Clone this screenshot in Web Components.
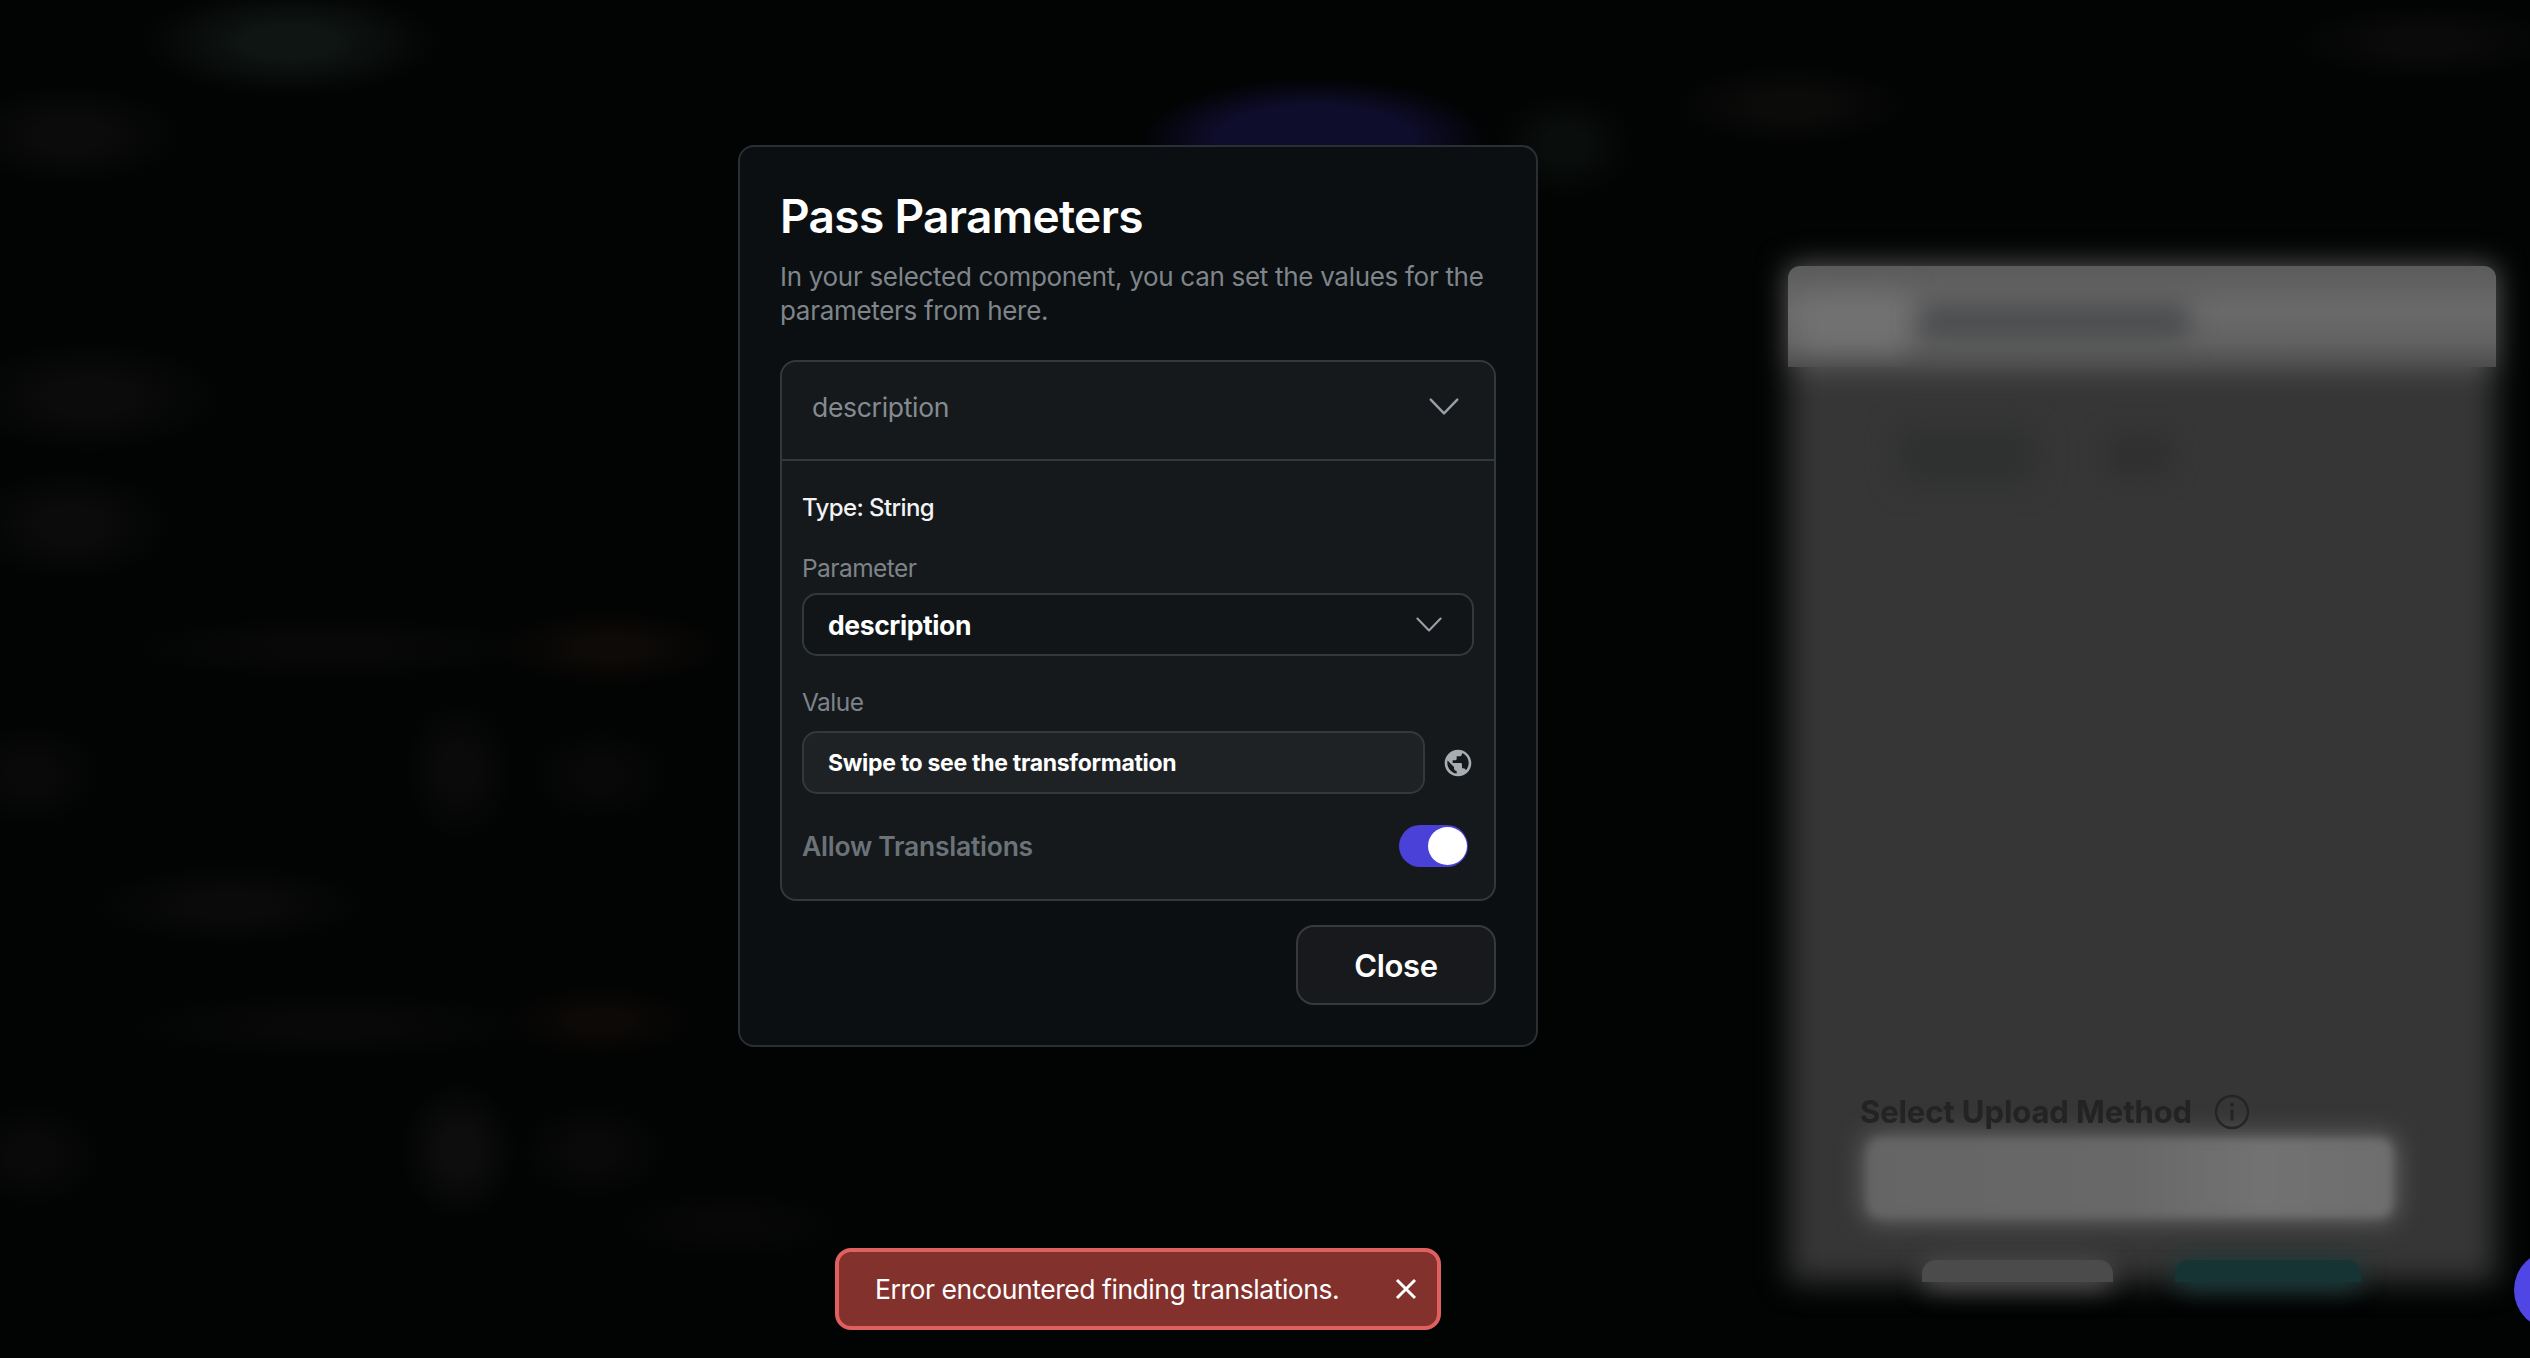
<!DOCTYPE html>
<html lang="en">
<head>
<meta charset="utf-8">
<title>Pass Parameters</title>
<style>
  html, body { margin: 0; height: 100%; background: #020303; overflow: hidden; }
  body { font-family: Inter, "Liberation Sans", sans-serif; color: #fff; }
</style>
</head>
<body>
<app-backdrop></app-backdrop>
<modal-layer>
  <params-modal heading="Pass Parameters" text="In your selected component, you can set the values for the parameters from here.">
    <param-accordion label="description">
      <param-type>Type: String</param-type>
      <param-select label="Parameter" value="description"></param-select>
      <param-value label="Value" value="Swipe to see the transformation"></param-value>
      <param-toggle label="Allow Translations"></param-toggle>
    </param-accordion>
  </params-modal>
  <error-toast>Error encountered finding translations.</error-toast>
</modal-layer>
<chat-bubble></chat-bubble>

<script>
/**
 * Small helper, every element below sets its shadow root from a string.
 *
 * @param {HTMLElement} el The element.
 * @param {string} html Markup and style.
 */
const render = (el, html) => {
  el.attachShadow({ mode: 'open' }).innerHTML = html
}

const chevron = (w, h) => `
  <svg width="${w}" height="${h}" viewBox="0 0 28 16" fill="none" aria-hidden="true">
    <path d="M1.5 1.5 14 14.5 26.5 1.5" stroke="#9aa0a5" stroke-width="2.2" stroke-linecap="round" stroke-linejoin="round"/>
  </svg>`

// Blurred page behind the modal. Only smudges survive the blur, so they are gradients.
customElements.define('app-backdrop', class extends HTMLElement {
  constructor () {
    super()
    const blob = (x, y, w, h, c) => `radial-gradient(ellipse ${w}px ${h}px at ${x}px ${y}px, ${c} 0%, ${c} 30%, transparent 100%)`
    const smudges = [
      blob(290, 42, 150, 55, '#0f1513'),
      blob(70, 135, 110, 50, '#0a0b0a'),
      blob(90, 397, 130, 56, '#0a0b0a'),
      blob(70, 525, 100, 56, '#0a0b0a'),
      blob(610, 648, 115, 38, '#0d0a07'),
      blob(330, 648, 200, 32, '#070807'),
      blob(459, 770, 55, 70, '#0a0a0a'),
      blob(600, 775, 70, 46, '#080808'),
      blob(30, 775, 70, 52, '#080908'),
      blob(230, 905, 135, 40, '#0a0a0a'),
      blob(600, 1021, 95, 36, '#0c0907'),
      blob(330, 1026, 200, 34, '#070807'),
      blob(459, 1151, 58, 70, '#0d0d0d'),
      blob(593, 1151, 72, 48, '#090909'),
      blob(32, 1155, 70, 52, '#090909'),
      blob(730, 1225, 110, 34, '#070707'),
      'radial-gradient(ellipse 175px 62px at 1315px 140px, #0f0d2c 0%, #0f0d2c 55%, transparent 100%)',
      blob(1565, 145, 70, 54, '#090d0b'),
      blob(1790, 105, 115, 40, '#0b0b0a'),
      blob(2425, 42, 130, 38, '#0a0a0a')
    ].join(',')
    render(this, `
      <style>
        :host { position: absolute; inset: 0; display: flex; justify-content: flex-end; align-items: flex-start;
          padding: 266px 34px 0 0; box-sizing: border-box; background: ${smudges}; }
      </style>
      <blurred-panel></blurred-panel>`)
  }
})

// The right hand preview panel, seen through the blur.
customElements.define('blurred-panel', class extends HTMLElement {
  constructor () {
    super()
    render(this, `
      <style>
        :host { display: block; position: relative; width: 708px; height: 1016px; }
        .glow { position: absolute; inset: 0; filter: blur(15px); display: flex; flex-direction: column; }
        .glow-head { height: 101px; background: #606060; }
        .glow-body { flex: 1; background: #363636; }
        .head { position: absolute; inset: 0 0 auto 0; height: 101px; border-radius: 12px 12px 0 0; overflow: hidden; background: linear-gradient(#5b5b5b, #6a6a6a 45%, #626262 75%, #4c4c4c); }
        .head i { position: absolute; left: 132px; top: 36px; width: 270px; height: 40px; background: #4d4e50; filter: blur(12px); border-radius: 8px; }
        .head b { position: absolute; left: 10px; top: 30px; width: 110px; height: 54px; background: #727272; filter: blur(14px); }
        .tabs { position: absolute; left: 108px; top: 160px; width: 140px; height: 58px; background: #2f3130; filter: blur(14px); border-radius: 10px; }
        .tab2 { position: absolute; left: 318px; top: 168px; width: 66px; height: 42px; background: #303030; filter: blur(12px); border-radius: 10px; }
        .method { position: absolute; left: 72px; top: 827px; display: flex; align-items: center; gap: 22px; filter: blur(.7px); }
        .method span { font: 700 31px Inter, "Liberation Sans", sans-serif; color: #232323; letter-spacing: -.1px; }
        .upload-glow { position: absolute; left: 76px; top: 869px; width: 532px; height: 86px; background: #686868; filter: blur(13px); border-radius: 10px; }
        .upload { position: absolute; left: 80px; top: 873px; width: 524px; height: 78px; border-radius: 12px; background: linear-gradient(90deg, #656565, #676867 50%, #727272 75%, #6e6e6e); filter: blur(5px); }
        .btn-glow { position: absolute; top: 994px; height: 30px; filter: blur(12px); border-radius: 14px; }
        .btn { position: absolute; top: 994px; height: 22px; border-radius: 14px 14px 0 0; }
      </style>
      <div class="glow"><div class="glow-head"></div><div class="glow-body"></div></div>
      <div class="head"><b></b><i></i></div>
      <div class="tabs"></div>
      <div class="tab2"></div>
      <div class="upload-glow"></div>
      <div class="upload"></div>
      <div class="method">
        <span>Select Upload Method</span>
        <svg width="36" height="36" viewBox="0 0 36 36" fill="none">
          <circle cx="18" cy="18" r="16" stroke="#242424" stroke-width="2.4"/>
          <circle cx="18" cy="10.5" r="2" fill="#242424"/>
          <path d="M18 15.5v11" stroke="#242424" stroke-width="3"/>
        </svg>
      </div>
      <div class="btn-glow" style="left:134px;width:191px;background:#4e4e4e"></div>
      <div class="btn-glow" style="left:387px;width:186px;background:#1a3a3a"></div>
      <div class="btn" style="left:134px;width:191px;background:#4b4b4b"></div>
      <div class="btn" style="left:387px;width:186px;background:#173434"></div>`)
  }
})

// Holds the modal and the toast above the blurred page, both centred on the same axis.
customElements.define('modal-layer', class extends HTMLElement {
  constructor () {
    super()
    render(this, `
      <style>
        :host { position: absolute; inset: 0; display: flex; flex-direction: column; align-items: center;
          padding: 145px 254px 0 0; box-sizing: border-box; gap: 201px; }
      </style>
      <slot></slot>`)
  }
})

customElements.define('params-modal', class extends HTMLElement {
  constructor () {
    super()
    render(this, `
      <style>
        :host { display: block; width: 800px; height: 902px; box-sizing: border-box; padding: 40px 40px 0;
          background: #0b0f11; border: 2px solid #2a2f33; border-radius: 16px; }
        h2 { margin: 0; font: 600 46px/58px Inter, "Liberation Sans", sans-serif; letter-spacing: -.67px; color: #fff; }
        p { margin: 15px 0 32px; font: 400 26px/34px Inter, "Liberation Sans", sans-serif; letter-spacing: -.3px; color: #7f858a; }
        footer { display: flex; justify-content: flex-end; margin-top: 24px; }
        button { width: 200px; height: 80px; box-sizing: border-box; background: #18191c; border: 2px solid #363a3d; border-radius: 18px;
          color: #fff; font: 600 31px Inter, "Liberation Sans", sans-serif; letter-spacing: -.3px; padding: 0; }
      </style>
      <h2>${this.getAttribute('heading')}</h2>
      <p>${this.getAttribute('text')}</p>
      <slot></slot>
      <footer><button>Close</button></footer>`)
  }
})

customElements.define('param-accordion', class extends HTMLElement {
  constructor () {
    super()
    render(this, `
      <style>
        :host { display: block; height: 541px; box-sizing: border-box; background: #15191c; border: 2px solid #33383c; border-radius: 16px; overflow: hidden; }
        header { display: flex; align-items: center; justify-content: space-between; height: 89px; padding: 0 35px 8px 30px;
          border-bottom: 2px solid #33383c; font: 400 26.5px Inter, "Liberation Sans", sans-serif; letter-spacing: -.3px; color: #858b90; }
        .body { padding: 29px 20px 0; display: flex; flex-direction: column; }
      </style>
      <header><span>${this.getAttribute('label')}</span>${chevron(30, 17)}</header>
      <div class="body"><slot></slot></div>`)
  }
})

customElements.define('param-type', class extends HTMLElement {
  constructor () {
    super()
    render(this, `
      <style>
        :host { display: block; font: 500 24px/36px Inter, "Liberation Sans", sans-serif; letter-spacing: -.6px; color: #f2f3f4; }
      </style>
      <slot></slot>`)
  }
})

customElements.define('param-select', class extends HTMLElement {
  constructor () {
    super()
    render(this, `
      <style>
        :host { display: block; margin-top: 24px; }
        label { display: block; font: 400 24.5px/36px Inter, "Liberation Sans", sans-serif; letter-spacing: -.55px; color: #7d8388; margin-bottom: 7px; }
        div { display: flex; align-items: center; justify-content: space-between; height: 63px; box-sizing: border-box; padding: 0 30px 0 24px;
          background: #111518; border: 2px solid #33383c; border-radius: 15px; font: 700 26.5px Inter, "Liberation Sans", sans-serif; letter-spacing: -.4px; color: #fff; }
      </style>
      <label>${this.getAttribute('label')}</label>
      <div><span>${this.getAttribute('value')}</span>${chevron(26, 15)}</div>`)
  }
})

customElements.define('param-value', class extends HTMLElement {
  constructor () {
    super()
    render(this, `
      <style>
        :host { display: block; margin-top: 28px; }
        label { display: block; font: 400 24.5px/36px Inter, "Liberation Sans", sans-serif; letter-spacing: -.55px; color: #7d8388; margin-bottom: 11px; }
        .row { display: flex; align-items: center; justify-content: space-between; }
        .box { width: 623px; height: 63px; box-sizing: border-box; display: flex; align-items: center; padding-left: 24px;
          background: #1e2225; border: 2px solid #33383c; border-radius: 15px; font: 700 23px Inter, "Liberation Sans", sans-serif; letter-spacing: -.3px; color: #fff; }
      </style>
      <label>${this.getAttribute('label')}</label>
      <div class="row">
        <div class="box">${this.getAttribute('value')}</div>
        <svg width="32" height="32" viewBox="0 0 24 24" fill="#a7adb1" aria-hidden="true">
          <path d="M12 2C6.48 2 2 6.48 2 12s4.48 10 10 10 10-4.48 10-10S17.52 2 12 2zm-1 17.93c-3.95-.49-7-3.85-7-7.93 0-.62.08-1.21.21-1.79L9 15v1c0 1.1.9 2 2 2v1.93zm6.9-2.54c-.26-.81-1-1.39-1.9-1.39h-1v-3c0-.55-.45-1-1-1H8v-2h2c.55 0 1-.45 1-1V7h2c1.1 0 2-.9 2-2v-.41c2.93 1.19 5 4.06 5 7.41 0 2.08-.8 3.97-2.1 5.39z"/>
        </svg>
      </div>`)
  }
})

customElements.define('param-toggle', class extends HTMLElement {
  constructor () {
    super()
    render(this, `
      <style>
        :host { display: flex; align-items: center; justify-content: space-between; margin-top: 31px; padding-right: 6px;
          font: 600 26.5px Inter, "Liberation Sans", sans-serif; letter-spacing: -.25px; color: #6c7378; }
        .track { width: 69px; height: 42px; box-sizing: border-box; padding: 2px 1px 2px 0; display: flex; justify-content: flex-end;
          background: #4a41d8; border-radius: 21px; }
        .knob { width: 39px; height: 38px; border-radius: 50%; background: #fff; }
      </style>
      <span>${this.getAttribute('label')}</span>
      <div class="track"><div class="knob"></div></div>`)
  }
})

customElements.define('error-toast', class extends HTMLElement {
  constructor () {
    super()
    render(this, `
      <style>
        :host { display: flex; align-items: center; justify-content: space-between; width: 606px; height: 82px; box-sizing: border-box;
          padding: 0 20px 0 36px; background: #82312d; border: 4px solid #e0605f; border-radius: 16px;
          font: 400 26.5px Inter, "Liberation Sans", sans-serif; letter-spacing: -.45px; color: #fff; }
      </style>
      <span><slot></slot></span>
      <svg width="22" height="22" viewBox="0 0 22 22" fill="none" aria-hidden="true">
        <path d="M2 2 20 20M20 2 2 20" stroke="#fff" stroke-width="3"/>
      </svg>`)
  }
})

// Help button, cut off by the right edge of the window.
customElements.define('chat-bubble', class extends HTMLElement {
  constructor () {
    super()
    render(this, `
      <style>
        :host { position: absolute; left: 2514px; top: 1250px; width: 80px; height: 80px; border-radius: 50%; background: #4f46e5; }
      </style>`)
  }
})
</script>
</body>
</html>
